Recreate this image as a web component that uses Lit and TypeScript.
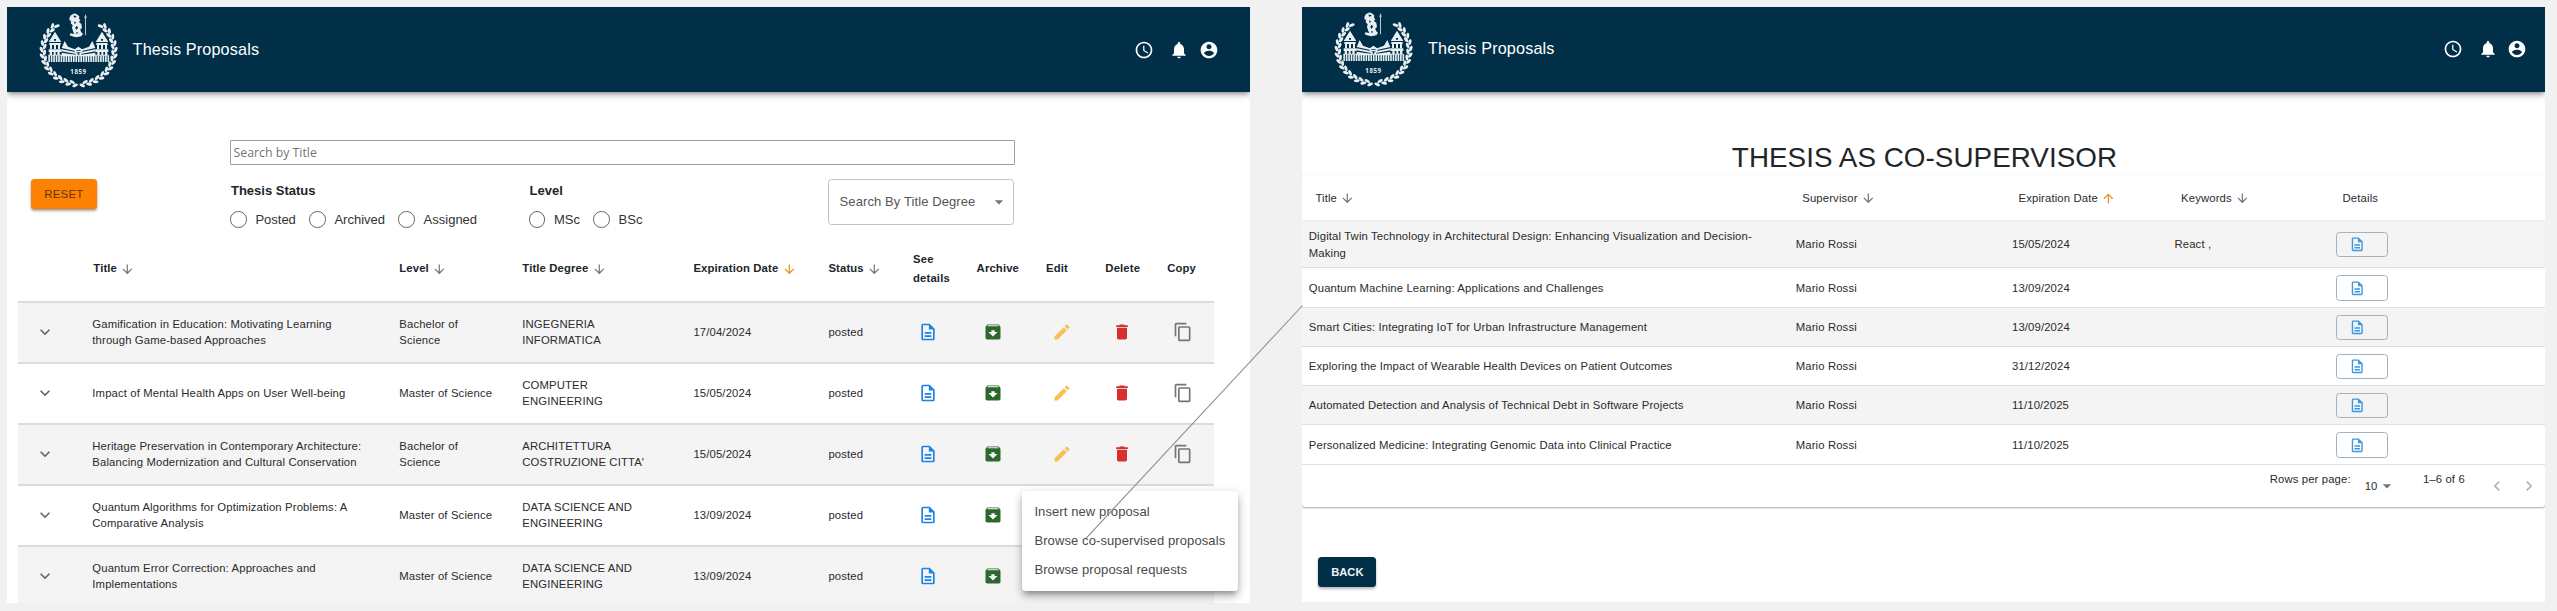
import { LitElement, html, svg, css, nothing } from 'lit';
import { customElement, property } from 'lit/decorators.js';
import { classMap } from 'lit/directives/class-map.js';

const PATHS = {
  clock: 'M11.99 2C6.47 2 2 6.48 2 12s4.47 10 9.99 10C17.52 22 22 17.52 22 12S17.52 2 11.99 2zM12 20c-4.42 0-8-3.58-8-8s3.58-8 8-8 8 3.58 8 8-3.58 8-8 8zm.5-13H11v6l5.25 3.15.75-1.23-4.5-2.67z',
  bell: 'M12 22c1.1 0 2-.9 2-2h-4c0 1.1.89 2 2 2zm6-6v-5c0-3.07-1.64-5.64-4.5-6.32V4c0-.83-.67-1.5-1.5-1.5s-1.5.67-1.5 1.5v.68C7.63 5.36 6 7.92 6 11v5l-2 2v1h16v-1l-2-2z',
  account: 'M12 2C6.48 2 2 6.48 2 12s4.48 10 10 10 10-4.48 10-10S17.52 2 12 2zm0 3c1.66 0 3 1.34 3 3s-1.34 3-3 3-3-1.34-3-3 1.34-3 3-3zm0 14.2c-2.5 0-4.71-1.28-6-3.22.03-1.99 4-3.08 6-3.08 1.99 0 5.97 1.09 6 3.08-1.29 1.94-3.5 3.22-6 3.22z',
  down: 'M20 12l-1.41-1.41L13 16.17V4h-2v12.17l-5.58-5.59L4 12l8 8 8-8z',
  up: 'M4 12l1.41 1.41L11 7.83V20h2V7.83l5.58 5.59L20 12l-8-8-8 8z',
  expand: 'M7.41 8.59 12 13.17l4.59-4.58L18 10l-6 6-6-6 1.41-1.41z',
  doc: 'M8 16h8v2H8zm0-4h8v2H8zm6-10H6c-1.1 0-2 .9-2 2v16c0 1.1.89 2 1.99 2H18c1.1 0 2-.9 2-2V8l-6-6zm4 18H6V4h7v5h5v11z',
  archive: 'M20.54 5.23l-1.39-1.68C18.88 3.21 18.47 3 18 3H6c-.47 0-.88.21-1.16.55L3.46 5.23C3.17 5.57 3 6.02 3 6.5V19c0 1.1.9 2 2 2h14c1.1 0 2-.9 2-2V6.5c0-.48-.17-.93-.46-1.27zM12 17.5L6.5 12H10v-2h4v2h3.5L12 17.5zM5.12 5l.81-1h12l.94 1H5.12z',
  edit: 'M3 17.25V21h3.75L17.81 9.94l-3.75-3.75L3 17.25zM20.71 7.04c.39-.39.39-1.02 0-1.41l-2.34-2.34c-.39-.39-1.02-.39-1.41 0l-1.83 1.83 3.75 3.75 1.83-1.83z',
  trash: 'M6 19c0 1.1.9 2 2 2h8c1.1 0 2-.9 2-2V7H6v12zM19 4h-3.5l-1-1h-5l-1 1H5v2h14V4z',
  copy: 'M16 1H4c-1.1 0-2 .9-2 2v14h2V3h12V1zm3 4H8c-1.1 0-2 .9-2 2v14c0 1.1.9 2 2 2h11c1.1 0 2-.9 2-2V7c0-1.1-.9-2-2-2zm0 16H8V7h11v14z',
  caret: 'M7 10l5 5 5-5z',
  left: 'M15.41 7.41 14 6l-6 6 6 6 1.41-1.41L10.83 12z',
  right: 'M10 6 8.59 7.41 13.17 12l-4.58 4.59L10 18l6-6z',
};
type IconName = keyof typeof PATHS;

const icon = (name: IconName, cls = '') =>
  html`<svg class="icon ${cls}" viewBox="0 0 24 24"><path d=${PATHS[name]}></path></svg>`;

const base = css`
  :host { font-family: "Liberation Sans", Arial, sans-serif; color: #2b2b2b; }
  * { box-sizing: border-box; }
  .icon { width: 20px; height: 20px; fill: currentColor; display: block; flex: none; }
  .sort { width: 14.6px; height: 14.6px; color: #757575; }
  .sort.active { color: #ee8c1c; }
  .blue { color: #1c82e6; }
  .green { color: #2c682d; }
  .amber { color: #f8bf55; }
  .red { color: #d62f2f; }
  .grey { color: #757575; }
`;

@customElement('uni-crest')
class UniCrest extends LitElement {
  static styles = css`
    :host { display: block; width: 80px; height: 76px; }
    svg { display: block; width: 80px; height: 76px; }
    .year { font: 700 18.5px "Open Sans", "Noto Sans", sans-serif; fill: #e9f0f4; }
  `;
  render() {
    const leaves = [];
    for (const side of [-1, 1]) {
      for (let i = 0; i < 13; i++) {
        const a = ((8 + i * 10.8) * Math.PI) / 180;
        const x = 179 + side * 109 * Math.sin(a);
        const y = 148 + 102 * Math.cos(a);
        const t = (Math.atan2(-102 * Math.sin(a), side * 109 * Math.cos(a)) * 180) / Math.PI;
        leaves.push(svg`<g transform="translate(${x} ${y}) rotate(${t})">
          <ellipse cx="-3" cy=${side * 4.4} rx="9" ry="4.5" transform="rotate(${side * 30})"></ellipse>
          <ellipse cx="7" cy=${side * -4} rx="9" ry="4.5" transform="rotate(${side * -22})"></ellipse></g>`);
      }
    }
    const columns = [];
    for (let x = 88; x < 268; x += 7.4) {
      columns.push(svg`<rect x=${x} y="162" width="4.8" height="20"></rect>`);
    }
    const wing = svg`
      <path fill-rule="evenodd" d="M108 91L127 122H89ZM105 113V118H111V113Z"></path>
      <path d="M91 125H125V131H91ZM93 131H99V143H93ZM105 131H111V143H105ZM117 131H123V143H117ZM89 144H128V152H89ZM92 152H99V161H92ZM104 152H110V161H104ZM115 152H122V161H115Z"></path>
      <path d="M137 119L147 136L172 145V150L128 140Z"></path>
      <path d="M128 144L172 153V158L128 150ZM128 154L172 161V165H128Z"></path>`;
    return html`<svg viewBox="60 32 240 228" fill="#e9f0f4">
      ${leaves}${wing}
      <g transform="translate(357 0) scale(-1 1)">${wing}</g>
      <path d="M164 146L178 136L193 146ZM167 148H190V153H167ZM171 154H176V164H171ZM181 154H186V164H181Z"></path>
      <rect x="88" y="160" width="180" height="3"></rect>${columns}
      <path d="M151 52Q153 40 164 37Q172 36 177 42L181 45L180 51L184 59L179 61L187 68L189 80L184 84L186 92L192 97L187 105Q168 111 152 102L154 96L166 98L163 92L159 80L161 72L155 66L157 56L153 60Z"></path>
      <path d="M163 43Q170 41 173 47L166 49ZM165 60L172 64L167 68ZM172 74L178 78L172 86L169 80ZM172 91L178 95L172 98Z" fill="#002f47"></path>
      <path d="M200 38L203 48L201 52V102H198V52L196 48Z" opacity=".8"></path>
      <text class="year" x="154" y="218" textLength="47">1859</text>
    </svg>`;
  }
}

@customElement('top-bar')
class TopBar extends LitElement {
  static styles = [base, css`
    :host { display: flex; align-items: center; height: 85px; background: #002f47; color: #fff;
      box-shadow: 0 2px 4px -1px rgba(0,0,0,.3), 0 3px 7px rgba(0,0,0,.26); padding: 0 31.4px 0 32px; position: relative; }
    :host([compact]) { padding: 0 17.6px 1.5px 32.4px; }
    .name { font-size: 16.2px; letter-spacing: .15px; margin-left: 13.6px; flex: 1; }
    .clock { margin-right: 15.7px; }
    .bell { margin-right: 9.2px; }
  `];
  render() {
    return html`<uni-crest></uni-crest><div class="name">Thesis Proposals</div>
      ${icon('clock', 'clock')}${icon('bell', 'bell')}${icon('account')}`;
  }
}

interface Proposal { title: string[]; level: string[]; degree: string[]; date: string; }
const MASTER = ['Master of Science'];
const BACHELOR = ['Bachelor of', 'Science'];
const PROPOSALS: Proposal[] = [
  { title: ['Gamification in Education: Motivating Learning', 'through Game-based Approaches'], level: BACHELOR, degree: ['INGEGNERIA', 'INFORMATICA'], date: '17/04/2024' },
  { title: ['Impact of Mental Health Apps on User Well-being'], level: MASTER, degree: ['COMPUTER', 'ENGINEERING'], date: '15/05/2024' },
  { title: ['Heritage Preservation in Contemporary Architecture:', 'Balancing Modernization and Cultural Conservation'], level: BACHELOR, degree: ['ARCHITETTURA', "COSTRUZIONE CITTA'"], date: '15/05/2024' },
  { title: ['Quantum Algorithms for Optimization Problems: A', 'Comparative Analysis'], level: MASTER, degree: ['DATA SCIENCE AND', 'ENGINEERING'], date: '13/09/2024' },
  { title: ['Quantum Error Correction: Approaches and', 'Implementations'], level: MASTER, degree: ['DATA SCIENCE AND', 'ENGINEERING'], date: '13/09/2024' },
];
const lines = (l: string[]) => l.map((t) => html`<div>${t}</div>`);

@customElement('proposals-page')
class ProposalsPage extends LitElement {
  static styles = [base, css`
    :host { display: flex; flex-direction: column; height: 596px; background: #fff; overflow: hidden; }
    top-bar, .filters, .table { flex: none; }
    .filters { display: grid; grid-template-columns: 65.7px 784.6px; column-gap: 133.3px; row-gap: 14.6px; padding: 48.3px 0 0 24px; }
    .search { grid-column: 2; height: 24.4px; border: 1px solid #a0a0a0; border-radius: 1px; padding: 0 2.6px; color: #757575;
      font: 12.3px/24px "Open Sans", "Noto Sans", sans-serif; }
    .reset { height: 30px; border-radius: 3.5px; background: #fd8204; color: #683500; font-size: 11.5px; letter-spacing: .2px;
      display: flex; align-items: center; justify-content: center; box-shadow: 0 2px 3px rgba(0,0,0,.3), 0 1px 2px rgba(0,0,0,.15); }
    .controls { display: grid; grid-template-columns: 298.6px 299.2px 186.4px; height: 45.6px; font-size: 13px; line-height: 16px; }
    .legend { font-weight: 700; padding: 3.6px 0 0 1px; color: #222529; }
    .options { display: flex; gap: 13.2px; margin-top: 12.5px; color: #333; }
    .option { display: flex; align-items: center; gap: 8.8px; }
    .option i { width: 16.6px; height: 16.6px; border: 1.7px solid #666; border-radius: 50%; }
    .select { height: 45.5px; border: 1px solid #c2c2c2; border-radius: 3.5px; display: flex; align-items: center; justify-content: space-between;
      padding: 0 4.5px 0 10.8px; color: #555; letter-spacing: .1px; }
    .table { margin: 12px 0 0 11px; width: 1196px; font-size: 11.3px; letter-spacing: .14px; line-height: 16.2px; }
    .row { display: grid; grid-template-columns: 74.3px 307px 123px 171.1px 135px 84.7px 63.5px 69.4px 59.4px 61.8px 46.8px;
      align-items: center; height: 61px; border-bottom: 2px solid #dcdcdc; }
    .row.odd { background: #f4f4f4; }
    .row.head { height: 66px; font-weight: 700; color: #212529; line-height: 19.3px; }
    .cell { display: flex; align-items: center; gap: 3.2px; }
    .cell.first { padding-left: 1px; }
    .toggle { padding-left: 16.5px; color: #666; }
    .act { padding-left: 6.2px; }
    .act.see { padding-left: 5.3px; }
  `];
  render() {
    const radio = (t: string) => html`<span class="option"><i></i>${t}</span>`;
    const head = (t: string, cls = '') => html`<div class="cell ${cls}">${t}${icon('down', t.startsWith('Exp') ? 'sort active' : 'sort')}</div>`;
    return html`<top-bar></top-bar>
      <div class="filters">
        <div class="search">Search by Title</div>
        <div class="reset">RESET</div>
        <div class="controls">
          <div><div class="legend">Thesis Status</div>
            <div class="options">${['Posted', 'Archived', 'Assigned'].map(radio)}</div></div>
          <div><div class="legend">Level</div>
            <div class="options">${['MSc', 'BSc'].map(radio)}</div></div>
          <div class="select"><span>Search By Title Degree</span>${icon('caret', 'grey')}</div>
        </div>
      </div>
      <div class="table">
        <div class="row head"><div></div>${head('Title', 'first')}${['Level', 'Title Degree', 'Expiration Date', 'Status'].map((t) => head(t))}
          <div><div>See</div><div>details</div></div>
          ${['Archive', 'Edit', 'Delete', 'Copy'].map((t) => html`<div>${t}</div>`)}</div>
        ${PROPOSALS.map((p, i) => html`<div class=${classMap({ row: true, odd: i % 2 === 0 })}>
          <div class="toggle">${icon('expand')}</div>
          <div>${lines(p.title)}</div><div>${lines(p.level)}</div><div>${lines(p.degree)}</div>
          <div>${p.date}</div><div>posted</div>
          <div class="act see">${icon('doc', 'blue')}</div><div class="act">${icon('archive', 'green')}</div>
          ${i < 3 ? html`<div class="act">${icon('edit', 'amber')}</div><div class="act">${icon('trash', 'red')}</div>
            <div class="act">${icon('copy', 'grey')}</div>` : nothing}
        </div>`)}
      </div>`;
  }
}

const CO_SUPERVISED = [
  { title: ['Digital Twin Technology in Architectural Design: Enhancing Visualization and Decision-', 'Making'], date: '15/05/2024', keywords: 'React ,', height: 47 },
  { title: ['Quantum Machine Learning: Applications and Challenges'], date: '13/09/2024', keywords: '', height: 40 },
  { title: ['Smart Cities: Integrating IoT for Urban Infrastructure Management'], date: '13/09/2024', keywords: '', height: 39 },
  { title: ['Exploring the Impact of Wearable Health Devices on Patient Outcomes'], date: '31/12/2024', keywords: '', height: 39 },
  { title: ['Automated Detection and Analysis of Technical Debt in Software Projects'], date: '11/10/2025', keywords: '', height: 39 },
  { title: ['Personalized Medicine: Integrating Genomic Data into Clinical Practice'], date: '11/10/2025', keywords: '', height: 40 },
];

@customElement('cosupervisor-page')
class CosupervisorPage extends LitElement {
  static styles = [base, css`
    :host { display: flex; flex-direction: column; height: 595px; background: #fff; overflow: hidden; }
    top-bar, h1, .paper, .back { flex: none; }
    h1 { margin: 49.5px 0 0 2px; text-align: center; font-size: 27.8px; letter-spacing: .05px; line-height: 32px; font-weight: 400; color: #212529; }
    .paper { margin-top: 1.5px; height: 332px; border-radius: 3px; box-shadow: 0 1px 2px rgba(0,0,0,.34), 0 0 1px rgba(0,0,0,.12);
      font-size: 11.3px; letter-spacing: .135px; line-height: 16.2px; }
    .row { display: grid; grid-template-columns: 486.9px 216.3px 162.5px 161.5px 1fr; align-items: center; padding: 1px 0 0 6.8px;
      border-bottom: 1px solid #dedede; }
    .row.odd { background: #f4f4f4; }
    .row.head { height: 46px; padding: 2px 0 0 13.4px; border-color: #ececec; }
    .cell { display: flex; align-items: center; gap: 3.2px; }
    .btn { width: 52.4px; height: 25.4px; border: 1px solid #9fb2c2; border-radius: 3.5px; display: flex; align-items: center; padding-left: 12.3px; }
    .btn .icon { width: 16.5px; height: 16.5px; color: #3d97df; }
    .pager { display: flex; height: 42px; align-items: center; padding-left: 967.7px; }
    .pager .up { padding-bottom: 13px; }
    .perpage { width: 95px; }
    .count { margin-right: 8.4px; }
    .range { width: 64px; margin-left: 26px; }
    .pager .nav { color: #b4b4b4; }
    .nav + .nav { margin-left: 12.3px; }
    .pager .caret { margin: 0 0 0 -9px; }
    .back { margin: 49.7px 0 0 16.2px; width: 58.3px; height: 30px; border-radius: 3.5px; background: #002f47; color: #eef3f6; font-size: 11.2px;
      font-weight: 700; display: flex; align-items: center; justify-content: center; box-shadow: 0 2px 3px rgba(0,0,0,.28); }
  `];
  render() {
    const head = (t: string, dir: IconName | null) => html`<div class="cell">${t}${dir ? icon(dir, dir === 'up' ? 'sort active' : 'sort') : nothing}</div>`;
    return html`<top-bar compact></top-bar>
      <h1>THESIS AS CO-SUPERVISOR</h1>
      <div class="paper">
        <div class="row head">${head('Title', 'down')}${head('Supervisor', 'down')}${head('Expiration Date', 'up')}${head('Keywords', 'down')}${head('Details', null)}</div>
        ${CO_SUPERVISED.map((p, i) => html`<div class=${classMap({ row: true, odd: i % 2 === 0 })} style="height:${p.height}px">
          <div>${lines(p.title)}</div><div>Mario Rossi</div><div>${p.date}</div><div>${p.keywords}</div>
          <div class="btn">${icon('doc')}</div></div>`)}
        <div class="pager">
          <div class="perpage up">Rows per page:</div><div class="count">10</div>${icon('caret', 'caret grey')}
          <div class="range up">1–6 of 6</div>${icon('left', 'nav')}${icon('right', 'nav')}
        </div>
      </div>
      <div class="back">BACK</div>`;
  }
}

@customElement('app-root')
class AppRoot extends LitElement {
  @property({ type: Array }) actions = ['Insert new proposal', 'Browse co-supervised proposals', 'Browse proposal requests'];
  static styles = [base, css`
    :host { display: grid; grid-template-columns: 1243px 1243px; column-gap: 52px; align-items: start; width: 2557px; height: 611px;
      padding: 7px 0 0 7px; background: #f1f1f1; position: relative; overflow: hidden; box-sizing: border-box; }
    .menu { position: absolute; left: 1021.7px; top: 490.7px; width: 216.8px; height: 100.4px; padding: 6.6px 12.7px; background: #fff;
      border-radius: 3.5px; font-size: 13px; letter-spacing: .1px; line-height: 29.1px; color: #4a4a4a; white-space: nowrap;
      box-shadow: 0 4px 5px -2px rgba(0,0,0,.26), 0 6px 9px rgba(0,0,0,.18), 0 2px 12px rgba(0,0,0,.14); }
    .link { position: absolute; left: 0; top: 0; width: 2557px; height: 611px; stroke: #8c8c8c; stroke-width: 1.1; }
  `];
  render() {
    return html`<proposals-page></proposals-page><cosupervisor-page></cosupervisor-page>
      <div class="menu">${this.actions.map((a) => html`<div>${a}</div>`)}</div>
      <svg class="link" viewBox="0 0 2557 611"><line x1="1086" y1="538.3" x2="1302.5" y2="305.5"></line></svg>`;
  }
}
